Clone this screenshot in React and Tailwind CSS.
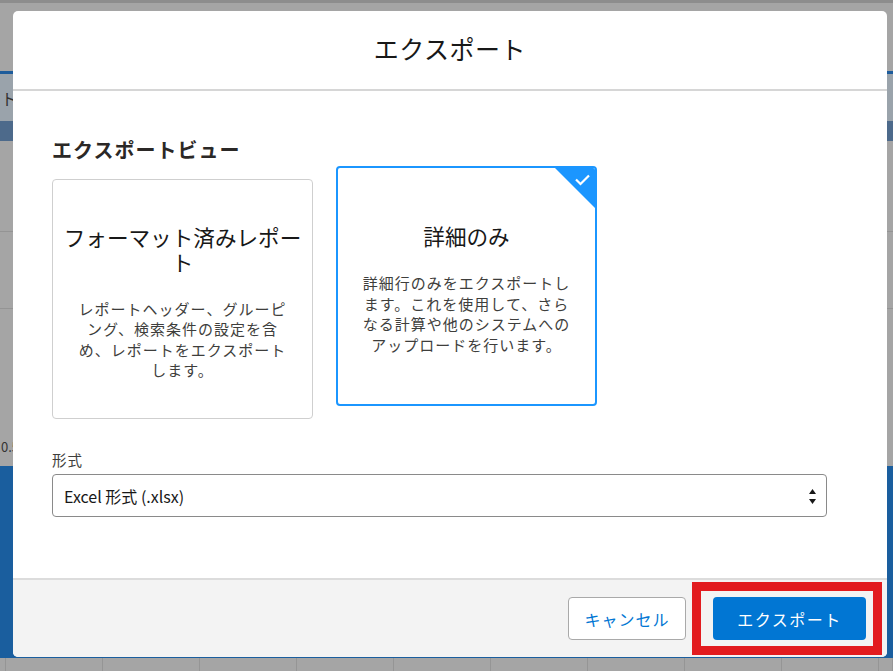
import React, { useState } from "react";

const views = [
  {
    id: "formatted",
    title: "フォーマット済みレポート",
    desc: "レポートヘッダー、グルーピング、検索条件の設定を含め、レポートをエクスポートします。",
  },
  {
    id: "details",
    title: "詳細のみ",
    desc: "詳細行のみをエクスポートします。これを使用して、さらなる計算や他のシステムへのアップロードを行います。",
  },
];

const ViewCard = ({ view, selected, onSelect }) => (
  <button
    onClick={onSelect}
    className={
      selected
        ? "relative flex h-[240px] w-[261px] flex-col items-center justify-center overflow-hidden rounded-[4px] border-2 border-[#1b96ff] bg-white px-[8px] pt-[6px] text-center"
        : "relative mt-[13px] flex h-[240px] w-[261px] flex-col items-center justify-center overflow-hidden rounded-[4px] border border-[#cfcfcf] bg-white px-[9px] pt-[6px] text-center"
    }
  >
    {selected && (
      <svg className="absolute right-0 top-0" width="40" height="40" viewBox="0 0 40 40">
        <polygon points="0,0 40,0 40,40" fill="#1b96ff" />
        <path d="M21 11.5 L25.5 16 L34 7.5" fill="none" stroke="#fff" strokeWidth="2.2" />
      </svg>
    )}
    <div className="text-[21.6px] leading-[25px] text-[#181818]">{view.title}</div>
    <p className="mt-[25px] px-[13px] text-[15px] leading-[20.5px] tracking-[1px] text-[#3e3e3c]">
      {view.desc}
    </p>
  </button>
);

const App = () => {
  const [selected, setSelected] = useState("details");
  const [format, setFormat] = useState("xlsx");

  return (
    <div
      className="relative h-[671px] w-[893px] overflow-hidden bg-[#a5a5a5]"
      style={{ fontFamily: '"Noto Sans CJK JP", "Noto Sans", sans-serif' }}
    >
      {/* dimmed page behind the dialog */}
      <div className="flex h-full flex-col">
        <div className="h-[3px] bg-[#8d8d8d]" />
        <div className="h-[68px]" />
        <div className="h-[3px] bg-[#1d5c9b]" />
        <div className="flex h-[47px] items-center bg-[#9aa3ab] text-[16px] text-[#333]">
          <span className="ml-[1px]">ト</span>
        </div>
        <div className="h-[20px] bg-[#4d6a8b]" />
        <div className="h-[91px] border-b border-[#949494]" />
        <div className="h-[77px] border-b border-[#949494]" />
        <div className="flex h-[157px] items-end pb-[10px] text-[13px] text-[#333]">
          <span className="ml-[1px]">0.5</span>
        </div>
        <div className="h-[192px] bg-[#1a5e9e]" />
        <div className="grid flex-1 grid-cols-[6px_97px_97px_97px_97px_97px_97px_97px_97px_97px_1fr]">
          {Array.from({ length: 11 }).map((_, i) => (
            <div key={i} className="border-r border-[#959595]" />
          ))}
        </div>
      </div>

      {/* dialog */}
      <div className="absolute left-[13px] top-[11px] flex h-[646px] w-[874px] flex-col overflow-hidden rounded-[5px] bg-white">
        <div className="flex h-[80px] shrink-0 items-center justify-center border-b-2 border-[#d6d6d6] pb-[2px]">
          <h1 className="text-[25px] tracking-[0.5px] text-[#181818]">エクスポート</h1>
        </div>

        <div className="flex-1 px-[39px] pt-[45px]">
          <h2 className="text-[20px] font-bold leading-[28px] tracking-[1px] text-[#2b2826]">
            エクスポートビュー
          </h2>
          <div className="mt-[2px] flex items-start gap-[23px]">
            {views.map((v) => (
              <ViewCard
                key={v.id}
                view={v}
                selected={selected === v.id}
                onSelect={() => setSelected(v.id)}
              />
            ))}
          </div>

          <label className="mt-[32px] block text-[14.5px] leading-[18px] tracking-[1px] text-[#3e3e3c]">
            形式
          </label>
          <div className="relative mt-[5px] w-[775px]">
            <select
              value={format}
              onChange={(e) => setFormat(e.target.value)}
              className="h-[43px] w-full appearance-none rounded-[4px] border border-[#8a8a8a] bg-white pl-[11px] text-[16px] text-[#181818] outline-none"
            >
              <option value="xlsx">Excel 形式 (.xlsx)</option>
              <option value="csv">カンマ区切り形式 (.csv)</option>
            </select>
            <svg className="pointer-events-none absolute right-[11px] top-[12px]" width="7" height="20" viewBox="0 0 7 20">
              <polygon points="3.5,3 7,8 0,8" fill="#181818" />
              <polygon points="0,13 7,13 3.5,18" fill="#181818" />
            </svg>
          </div>
        </div>

        <div className="flex h-[79px] shrink-0 items-start justify-end gap-[27px] border-t-2 border-[#dcdcdc] bg-[#f3f3f3] pr-[21px] pt-[17px]">
          <button className="h-[43px] w-[118px] rounded-[4px] border border-[#a9a9a9] bg-white text-[16px] tracking-[1px] text-[#0176d3]">
            キャンセル
          </button>
          <button className="h-[43px] w-[153px] rounded-[4px] bg-[#0176d3] text-[16px] tracking-[1.5px] text-white">
            エクスポート
          </button>
        </div>

        {/* annotation frame around the export button */}
        <div className="pointer-events-none absolute left-[679px] top-[571px] h-[73px] w-[190px] border-[9px] border-[#e21b1f]" />
      </div>
    </div>
  );
};

export default App;
